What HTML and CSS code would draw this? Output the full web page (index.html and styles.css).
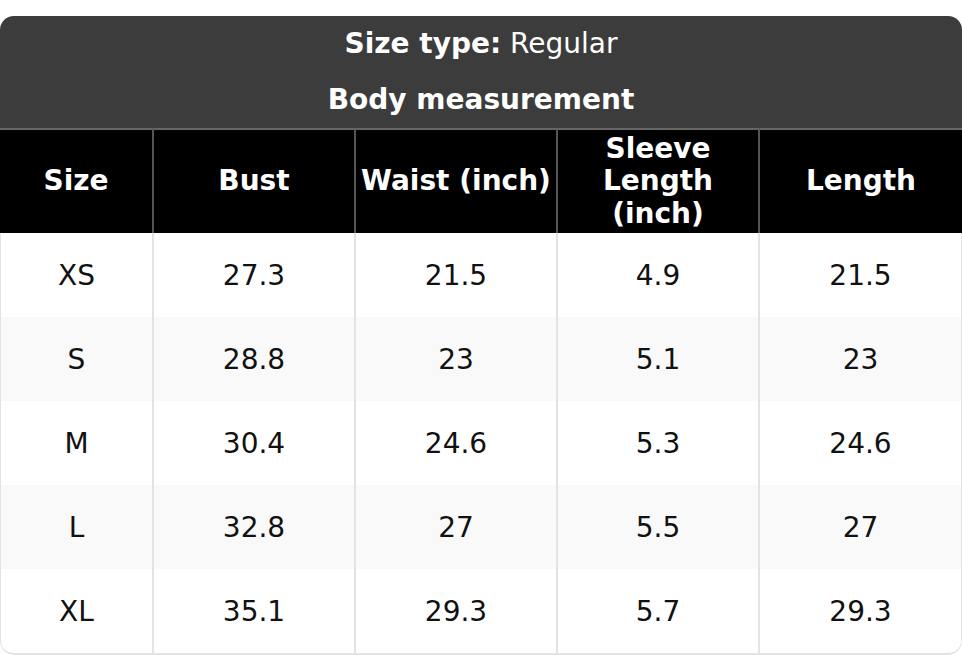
FILE: index.html
```html
<!DOCTYPE html>
<html>
<head>
<meta charset="utf-8">
<link rel="stylesheet" href="styles.css">
</head>
<body>
<div class="card">
  <div class="caption">
    <p class="cap-line"><strong>Size type:</strong> Regular</p>
    <p class="cap-line"><strong>Body measurement</strong></p>
  </div>
  <table class="chart">
    <colgroup>
      <col class="c-size">
      <col class="c-val">
      <col class="c-val">
      <col class="c-val">
      <col class="c-val">
    </colgroup>
    <thead>
      <tr>
        <th>Size</th>
        <th>Bust</th>
        <th>Waist (inch)</th>
        <th>Sleeve<br>Length<br>(inch)</th>
        <th>Length</th>
      </tr>
    </thead>
    <tbody>
      <tr><td>XS</td><td>27.3</td><td>21.5</td><td>4.9</td><td>21.5</td></tr>
      <tr><td>S</td><td>28.8</td><td>23</td><td>5.1</td><td>23</td></tr>
      <tr><td>M</td><td>30.4</td><td>24.6</td><td>5.3</td><td>24.6</td></tr>
      <tr><td>L</td><td>32.8</td><td>27</td><td>5.5</td><td>27</td></tr>
      <tr><td>XL</td><td>35.1</td><td>29.3</td><td>5.7</td><td>29.3</td></tr>
    </tbody>
  </table>
</div>
</body>
</html>
```
FILE: styles.css
```css
html, body {
  margin: 0;
  padding: 0;
  background: #ffffff;
}
body {
  padding-top: 16px;
  font-family: "DejaVu Sans", Verdana, sans-serif;
}
.card {
  width: 962px;
  border-radius: 14px;
  overflow: hidden;
}
.caption {
  background: #3c3c3c;
  color: #ffffff;
  text-align: center;
  font-size: 28px;
}
.cap-line {
  margin: 0;
  height: 56px;
  line-height: 56px;
}
.chart {
  width: 962px;
  table-layout: fixed;
  border-collapse: separate;
  border-spacing: 0;
  font-size: 28px;
}
.c-size { width: 154px; }
.chart th {
  background: #000000;
  color: #ffffff;
  font-weight: bold;
  height: 105px;
  padding: 0;
  line-height: 32.5px;
  border-top: 2px solid #666666;
  border-right: 2px solid #555555;
  box-sizing: border-box;
  text-align: center;
  vertical-align: middle;
}
.chart th:last-child { border-right: 0; }
.chart td {
  height: 84px;
  padding: 0;
  text-align: center;
  vertical-align: middle;
  color: #111111;
  border-right: 2px solid #e3e3e3;
  box-sizing: border-box;
  background: #ffffff;
}
.chart td:first-child { border-left: 1px solid #e3e3e3; }
.chart td:last-child { border-right: 1px solid #e3e3e3; }
.chart tbody tr:nth-child(even) td { background: #f9f9f9; }
.chart tbody tr:last-child td { border-bottom: 2px solid #e3e3e3; height: 86px; }
.chart tbody tr:last-child td:first-child { border-bottom-left-radius: 14px; }
.chart tbody tr:last-child td:last-child { border-bottom-right-radius: 14px; }
```
